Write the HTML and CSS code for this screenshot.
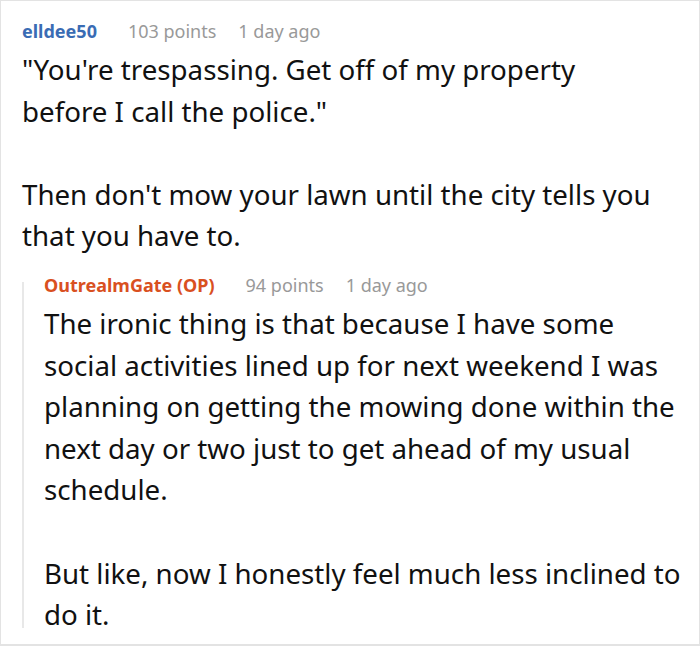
FILE: index.html
```html
<!DOCTYPE html>
<html>
<head>
<meta charset="utf-8">
<link rel="stylesheet" href="styles.css">
</head>
<body>
<div class="thread">
  <div class="comment">
    <div class="meta">
      <span class="user">elldee50</span>
      <span class="points">103 points</span>
      <span class="time">1 day ago</span>
    </div>
    <div class="body">
      <p>"You're trespassing. Get off of my property before I call the police."</p>
      <p>Then don't mow your lawn until the city tells you that you have to.</p>
    </div>
    <div class="reply">
      <div class="meta">
        <span class="user op">OutrealmGate (OP)</span>
        <span class="points">94 points</span>
        <span class="time">1 day ago</span>
      </div>
      <div class="body">
        <p>The ironic thing is that because I have some social activities lined up for next weekend I was planning on getting the mowing done within the next day or two just to get ahead of my usual schedule.</p>
        <p>But like, now I honestly feel much less inclined to do it.</p>
      </div>
    </div>
  </div>
</div>
</body>
</html>
```
FILE: styles.css
```css
html, body {
  margin: 0;
  padding: 0;
  background: #fff;
}
.thread {
  width: 700px;
  height: 646px;
  box-sizing: border-box;
  border: 1px solid #e3e3e3;
  border-bottom-width: 2px;
  overflow: hidden;
  font-family: "Noto Sans", sans-serif;
  color: #111;
}
.comment {
  padding: 18px 37px 0 21px;
}
.meta {
  display: flex;
  gap: 22px;
  font-size: 18px;
  line-height: 24px;
  color: #999;
}
.user {
  font-weight: bold;
  color: #3a6cb4;
  margin-right: 9px;
}
.user.op {
  color: #d9501f;
}
.body {
  font-size: 27.7px;
  line-height: 41.6px;
  margin-top: 6px;
}
.body p {
  margin: 0 0 41.6px;
}
.body p:last-child {
  margin-bottom: 0;
}
.reply {
  position: relative;
  margin-top: 16px;
  margin-right: -22px;
  padding-left: 22px;
}
.reply::before {
  content: "";
  position: absolute;
  left: 0;
  top: 9px;
  bottom: 8px;
  width: 2px;
  background: #e8e8e8;
}
.reply .body {
  margin-top: 6px;
}
```
